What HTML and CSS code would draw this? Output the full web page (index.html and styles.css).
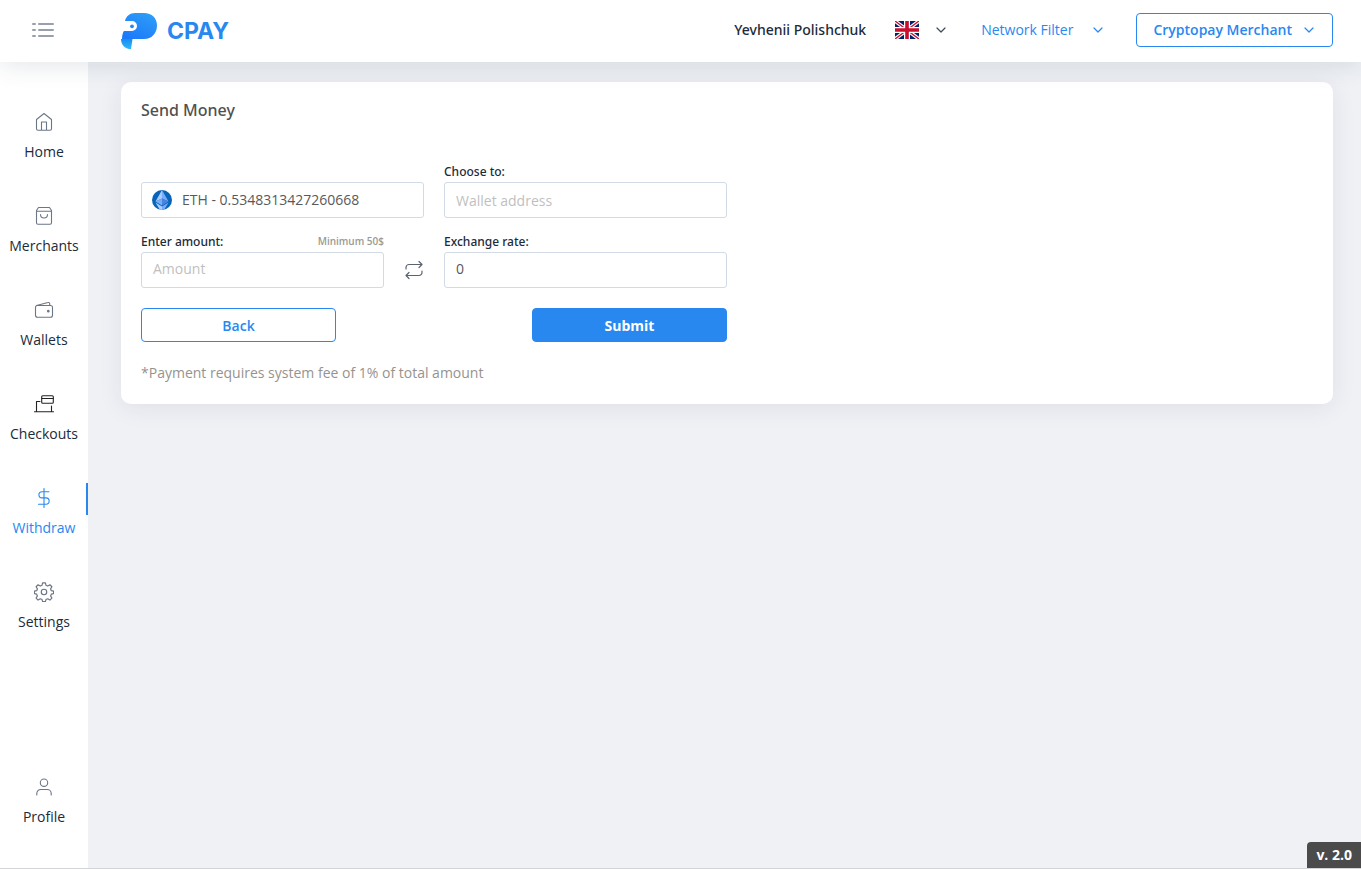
FILE: index.html
```html
<!DOCTYPE html>
<html lang="en">
<head>
<meta charset="utf-8">
<meta name="viewport" content="width=device-width, initial-scale=1">
<title>CPAY - Send Money</title>
<link rel="stylesheet" href="styles.css">
</head>
<body>
<svg class="defs" aria-hidden="true">
  <symbol id="chevron" viewBox="0 0 10 6"><path d="M1 1l4 4 4-4" fill="none" stroke="currentColor" stroke-width="1.2" stroke-linecap="round" stroke-linejoin="round"/></symbol>
</svg>
<header class="header">
  <button class="menu-toggle" type="button" aria-label="Toggle menu">
    <svg width="22" height="14" viewBox="0 0 22 14" fill="none" stroke="#9aa0aa" stroke-width="2" stroke-linecap="round"><path d="M1 1h2M7 1h14M1 7h2M7 7h14M1 13h2M7 13h14"/></svg>
  </button>
  <a class="logo" href="#">
    <svg width="36" height="36" viewBox="0 0 36 36" aria-hidden="true">
      <defs>
        <linearGradient id="head" x1="0.8" y1="0" x2="0.2" y2="1"><stop offset="0" stop-color="#2e9df7"/><stop offset="1" stop-color="#1b79fa"/></linearGradient>
        <linearGradient id="tail" x1="0" y1="0" x2="0" y2="1"><stop offset="0" stop-color="#1c8cf0"/><stop offset="1" stop-color="#2db8fb"/></linearGradient>
      </defs>
      <path d="M4 8C5 3 9 0 14 0h9c8 0 13 5 13 12.500S31 26 23 26H1c0-4 1-7 2-8h8a5 5 0 0 0 0-10z" fill="url(#head)"/>
      <path d="M0 26h11.500L10 36H8C3 35 0 31 0 26z" fill="url(#tail)"/>
      <circle cx="11" cy="13.300" r="1.900" fill="#2888f0"/>
    </svg>
    <span>CPAY</span>
  </a>
  <div class="header-right">
    <span class="user-name">Yevhenii Polishchuk</span>
    <button class="language" type="button" aria-label="Language: English">
      <svg width="24" height="18" viewBox="0 0 24 18" aria-hidden="true">
        <path fill="#012169" d="M0 0h24v18H0z"/>
        <path d="M0 0l24 18M24 0L0 18" stroke="#fff" stroke-width="3.600"/>
        <path d="M0 0l12 9M24 18L12 9" stroke="#c8102e" stroke-width="1.400"/>
        <path d="M24 0L12 9M0 18l12-9" stroke="#c8102e" stroke-width="1.400"/>
        <path d="M12 0v18M0 9h24" stroke="#fff" stroke-width="6"/>
        <path d="M12 0v18M0 9h24" stroke="#c8102e" stroke-width="3.600"/>
      </svg>
      <svg class="chevron"><use href="#chevron"/></svg>
    </button>
    <button class="filter" type="button">Network Filter<svg class="chevron"><use href="#chevron"/></svg></button>
    <button class="merchant" type="button">Cryptopay Merchant<svg class="chevron"><use href="#chevron"/></svg></button>
  </div>
</header>
<div class="layout">
  <nav class="sidebar">
    <a class="nav-item" href="#">
      <svg class="nav-icon" viewBox="0 0 20 20"><path d="M2.500 7.500L10 1.500l7.500 6v9.300a1.500 1.500 0 0 1-1.500 1.500H4a1.500 1.500 0 0 1-1.500-1.500zM7.500 18V10h5v8"/></svg>
      <span>Home</span>
    </a>
    <a class="nav-item" href="#">
      <svg class="nav-icon" viewBox="0 0 20 20"><path d="M2.500 4.500L4.500 1.500h11l2 3v12.300a1.500 1.500 0 0 1-1.500 1.500H4a1.500 1.500 0 0 1-1.500-1.500zM2.500 5.200h15M6.500 8.500a3.500 3.500 0 0 0 7 0"/></svg>
      <span>Merchants</span>
    </a>
    <a class="nav-item" href="#">
      <svg class="nav-icon" viewBox="0 0 20 20"><rect x="1.500" y="5.500" width="17" height="11.700" rx="2"/><path d="M2.500 5.500l11.500-3a1.300 1.300 0 0 1 1.700 1.200v1.800"/><circle cx="14.300" cy="11.200" r="0.800" fill="currentColor"/></svg>
      <span>Wallets</span>
    </a>
    <a class="nav-item" href="#">
      <svg class="nav-icon nav-icon-dark" viewBox="0 0 20 20"><path d="M0.500 17.700h19M2.500 17.700V7.500h3.500M17.500 12v5.700"/><rect x="7.700" y="1.700" width="11.600" height="7.600" rx="1"/><path d="M8 4.500h11"/></svg>
      <span>Checkouts</span>
    </a>
    <a class="nav-item nav-item-active" href="#" aria-current="page">
      <svg class="nav-icon" viewBox="0 0 20 20"><path d="M10 .5v19M15 3.700H8a3.100 3.100 0 0 0 0 6.200h4a3.100 3.100 0 0 1 0 6.300H4.500"/></svg>
      <span>Withdraw</span>
    </a>
    <a class="nav-item" href="#">
      <svg class="nav-icon nav-icon-gear" viewBox="0 0 24 24"><circle cx="12" cy="12" r="3.300"/><path d="M10.300 1h3.400l.7 3 2.100.9 2.600-1.600 2.400 2.400-1.600 2.600.9 2.100 2.700.6v2.900l-2.700.7-.9 2.100 1.600 2.600-2.400 2.400-2.600-1.600-2.100.9-.7 2.500h-3.400l-.7-2.500-2.100-.9-2.600 1.600-2.400-2.400 1.600-2.600-.9-2.100-2.700-.7V11l2.700-.6.9-2.100-1.600-2.600 2.400-2.400 2.600 1.600 2.100-.9z"/></svg>
      <span>Settings</span>
    </a>
    <a class="nav-item nav-item-last" href="#">
      <svg class="nav-icon" viewBox="0 0 20 20"><circle cx="10" cy="5.700" r="3.700"/><path d="M2.800 18v-1.500a4 4 0 0 1 4-4h6.400a4 4 0 0 1 4 4V18"/></svg>
      <span>Profile</span>
    </a>
  </nav>
  <main class="main">
    <section class="card">
      <h1 class="card-title">Send Money</h1>
      <form class="form">
        <div class="field field-wallet">
          <select class="control wallet-select" aria-label="Wallet"><option>ETH - 0.5348313427260668</option></select>
          <svg class="coin" width="20" height="20" viewBox="0 0 20 20" aria-hidden="true">
            <clipPath id="coin-clip"><circle cx="10" cy="10" r="10"/></clipPath>
            <g clip-path="url(#coin-clip)">
              <path fill="#0864b8" d="M0 0h20v20H0z"/>
              <path fill="#a9ccff" d="M10 0L3.500 11.500l6.500-3z"/><path fill="#78acf7" d="M10 0l6.500 11.500-6.500-3z"/>
              <path fill="#78acf7" d="M3.500 11.500l6.500-3v7z"/><path fill="#4b83e2" d="M16.500 11.500l-6.500-3v7z"/>
              <path fill="#a9ccff" d="M3.500 12.500l6.500 4V20H8z"/><path fill="#78acf7" d="M16.500 12.500l-6.500 4V20h2z"/>
            </g>
          </svg>
        </div>
        <div class="field">
          <label class="label" for="address">Choose to:</label>
          <input class="control" id="address" type="text" placeholder="Wallet address">
        </div>
        <div class="amount-row">
          <div class="field">
            <div class="label-row"><label class="label" for="amount">Enter amount:</label><span class="hint">Minimum 50$</span></div>
            <input class="control control-number" id="amount" type="text" placeholder="Amount">
          </div>
          <button class="swap" type="button" aria-label="Swap currencies">
            <svg width="20" height="20" viewBox="0 0 20 20" fill="none" stroke="#5c6370" stroke-width="1.200" stroke-linecap="round" stroke-linejoin="round"><path d="M2 9V7.500a3 3 0 0 1 3-3h13M15 1.500l3 3-3 3M18 11v1.500a3 3 0 0 1-3 3H2M5 12.500l-3 3 3 3"/></svg>
          </button>
        </div>
        <div class="field">
          <label class="label" for="rate">Exchange rate:</label>
          <input class="control control-number" id="rate" type="text" value="0">
        </div>
        <div class="actions">
          <button class="button" type="button">Back</button>
          <button class="button button-primary" type="submit">Submit</button>
        </div>
      </form>
      <p class="note">*Payment requires system fee of 1% of total amount</p>
    </section>
  </main>
</div>
<div class="version">v. 2.0</div>
</body>
</html>
```
FILE: styles.css
```css
* { box-sizing: border-box; }

body {
  margin: 0;
  min-height: 100vh;
  display: flex;
  flex-direction: column;
  border-bottom: 1px solid #d3d4d8;
  background: #eff1f5;
  color: #202b3a;
  font: 14px/20px "Open Sans", "Noto Sans", sans-serif;
}

button, input, select { font: inherit; }
button { padding: 0; border: 0; background: none; color: inherit; cursor: pointer; }
a { color: inherit; text-decoration: none; }
svg { display: block; flex: none; }
.defs { position: absolute; width: 0; height: 0; }
.chevron { width: 10px; height: 6px; }

.header {
  position: relative;
  z-index: 1;
  display: flex;
  align-items: center;
  height: 62px;
  padding: 0 28px 2px 32px;
  background: #fff;
  box-shadow: 0 4px 24px rgba(34, 60, 80, 0.12);
}
.menu-toggle { margin-right: 67px; }
.logo {
  display: flex;
  align-items: center;
  gap: 10px;
  padding-top: 2px;
  color: #2888f0;
  font: 700 23px/26px Inter, "Liberation Sans", sans-serif;
}
.header-right { display: flex; align-items: center; margin-left: auto; }
.user-name { margin-right: 29px; font-family: "Noto Sans", sans-serif; font-weight: 500; }
.language { display: flex; align-items: center; gap: 17px; margin-right: 35px; color: #3f4a59; }
.filter { display: flex; align-items: center; gap: 20px; margin-right: 33px; color: #2888f0; }
.merchant {
  display: flex;
  align-items: center;
  gap: 12px;
  height: 34px;
  padding: 0 18px 0 16px;
  border: 1px solid #2888f0;
  border-radius: 4px;
  color: #2888f0;
  font-weight: 600;
}

.layout { flex: 1; display: flex; }
.sidebar {
  display: flex;
  flex-direction: column;
  gap: 44px;
  width: 88px;
  padding: 50px 0 41px;
  background: #fff;
}
.nav-item {
  position: relative;
  display: flex;
  flex-direction: column;
  align-items: center;
  gap: 10px;
}
.nav-icon {
  width: 20px;
  height: 20px;
  color: #6b7686;
  fill: none;
  stroke: currentColor;
  stroke-width: 1.1;
  stroke-linecap: round;
  stroke-linejoin: round;
}
.nav-icon-gear { stroke-width: 1.4; }
.nav-icon-dark { color: #222; }
.nav-item-active, .nav-item-active .nav-icon { color: #2888f0; }
.nav-item-active::after {
  content: "";
  position: absolute;
  top: -5px;
  right: 0;
  width: 2px;
  height: 32px;
  background: #2888f0;
}
.nav-item-last { margin-top: auto; }

.main { flex: 1; padding: 20px 28px 20px 33px; }
.card {
  padding: 18px 20px 20px;
  border-radius: 10px;
  background: #fff;
  box-shadow: 0 4px 24px rgba(34, 41, 80, 0.08);
}
.card-title {
  margin: 0 0 42px;
  color: #505050;
  font: 500 16px/20px "Noto Sans", sans-serif;
}
.form {
  display: grid;
  grid-template-columns: 1fr 1fr;
  gap: 14px 20px;
  max-width: 586px;
}
.field { display: flex; flex-direction: column; flex: 1; min-width: 0; }
.field-wallet { position: relative; justify-content: flex-end; }
.label { color: #202b3a; font: 500 12px/20px "Noto Sans", sans-serif; }
.label-row { display: flex; justify-content: space-between; }
.hint { color: #9a9a94; font-size: 10px; font-weight: 600; line-height: 18px; }
.control {
  width: 100%;
  height: 36px;
  padding: 0 11px;
  border: 1px solid #d2dae6;
  border-radius: 3px;
  outline: 0;
  background: #fff;
  color: #595959;
}
.control-number { padding-bottom: 3px; }
.control::placeholder { color: #bfbfbf; }
.wallet-select { appearance: none; padding-left: 40px; }
.coin { position: absolute; left: 11px; bottom: 8px; pointer-events: none; }
.amount-row { display: flex; align-items: flex-end; }
.swap { display: flex; align-items: center; justify-content: flex-end; width: 40px; height: 36px; }
.actions { grid-column: 1 / -1; display: flex; justify-content: space-between; margin-top: 6px; }
.button {
  flex: 0 1 195px;
  height: 34px;
  padding-top: 2px;
  border: 1px solid #2888f0;
  border-radius: 4px;
  background: #fff;
  color: #2888f0;
  font-weight: 600;
}
.button-primary { background: #2888f0; color: #fff; font-weight: 700; }
.note { margin: 20px 0 0; color: #95938f; line-height: 22px; }

.version {
  position: fixed;
  right: 0;
  bottom: 1px;
  padding: 3px 9px;
  border-top-left-radius: 4px;
  background: #4b4b4b;
  color: #fff;
  font-weight: 700;
}
```
